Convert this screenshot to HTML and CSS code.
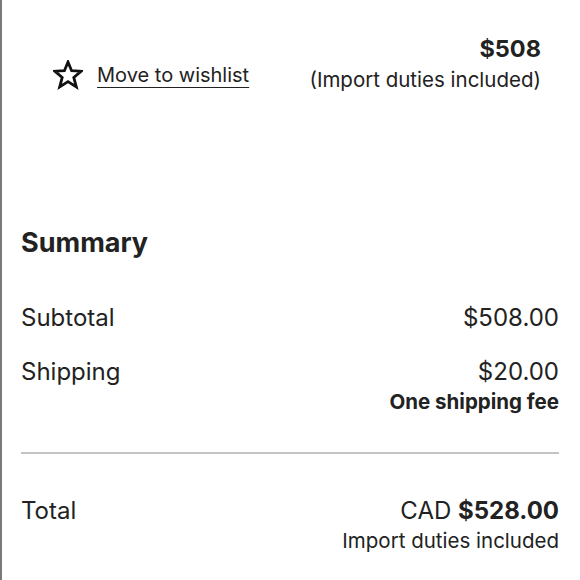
FILE: index.html
```html
<!DOCTYPE html>
<html lang="en">
<head>
<meta charset="utf-8">
<link rel="stylesheet" href="styles.css">
</head>
<body>
<div class="page">
  <div class="item-actions">
    <a class="wishlist" href="#">
      <svg class="star" width="30" height="30" viewBox="0 0 30 30" aria-hidden="true">
        <polygon points="15,2 18.6,10.7 28.3,11.2 20.8,17.4 23.3,26.9 15,21.6 6.7,26.9 9.2,17.4 1.7,11.2 11.4,10.7" fill="none" stroke="#111" stroke-width="2.8" stroke-linejoin="miter"/>
      </svg>
      <span class="wishlist-text">Move to wishlist</span>
    </a>
    <div class="item-price">
      <div class="price">$508</div>
      <div class="duties">(Import duties included)</div>
    </div>
  </div>

  <section class="summary">
    <h2 class="summary-title">Summary</h2>
    <div class="row">
      <span class="label">Subtotal</span>
      <span class="value">$508.00</span>
    </div>
    <div class="row">
      <span class="label">Shipping</span>
      <div class="value-block">
        <span class="value">$20.00</span>
        <span class="note-bold">One shipping fee</span>
      </div>
    </div>
    <hr class="divider">
    <div class="row total">
      <span class="label">Total</span>
      <div class="value-block">
        <span class="value">CAD <strong>$528.00</strong></span>
        <span class="note">Import duties included</span>
      </div>
    </div>
  </section>
</div>
</body>
</html>
```

FILE: styles.css
```css
* { box-sizing: border-box; }
html, body { margin: 0; padding: 0; background: #fff; }
body {
  font-family: Inter, "Liberation Sans", sans-serif;
  color: #222;
}
.page {
  border-left: 2px solid #7a7a7a;
  height: 580px;
  overflow: hidden;
}
.item-actions {
  display: flex;
  justify-content: space-between;
  align-items: flex-start;
  padding: 34px 39px 0 51px;
}
.wishlist {
  display: flex;
  align-items: center;
  gap: 14px;
  margin-top: 26px;
  color: #222;
  text-decoration: none;
}
.star { display: block; }
.wishlist-text {
  font-size: 20px;
  text-decoration: underline;
  text-decoration-thickness: 1px;
  text-underline-offset: 5px;
}
.item-price {
  display: flex;
  flex-direction: column;
  align-items: flex-end;
}
.price {
  font-size: 23.5px;
  font-weight: 700;
  line-height: 30px;
}
.duties {
  font-size: 20.5px;
  line-height: 32px;
}
.summary {
  padding: 131px 21px 0 19px;
}
.summary-title {
  margin: 0 0 43px;
  font-size: 27px;
  font-weight: 700;
  line-height: 32px;
}
.row {
  display: flex;
  justify-content: space-between;
  align-items: flex-start;
  margin-bottom: 22px;
}
.label, .value {
  font-size: 24px;
  line-height: 32px;
}
.value strong { font-weight: 700; }
.value-block {
  display: flex;
  flex-direction: column;
  align-items: flex-end;
}
.note-bold {
  font-size: 20.5px;
  font-weight: 700;
  line-height: 28px;
}
.note {
  font-size: 20.5px;
  line-height: 27px;
}
.divider {
  border: 0;
  border-top: 2px solid #c4c4c4;
  margin: 36px 0 41px;
}
```
